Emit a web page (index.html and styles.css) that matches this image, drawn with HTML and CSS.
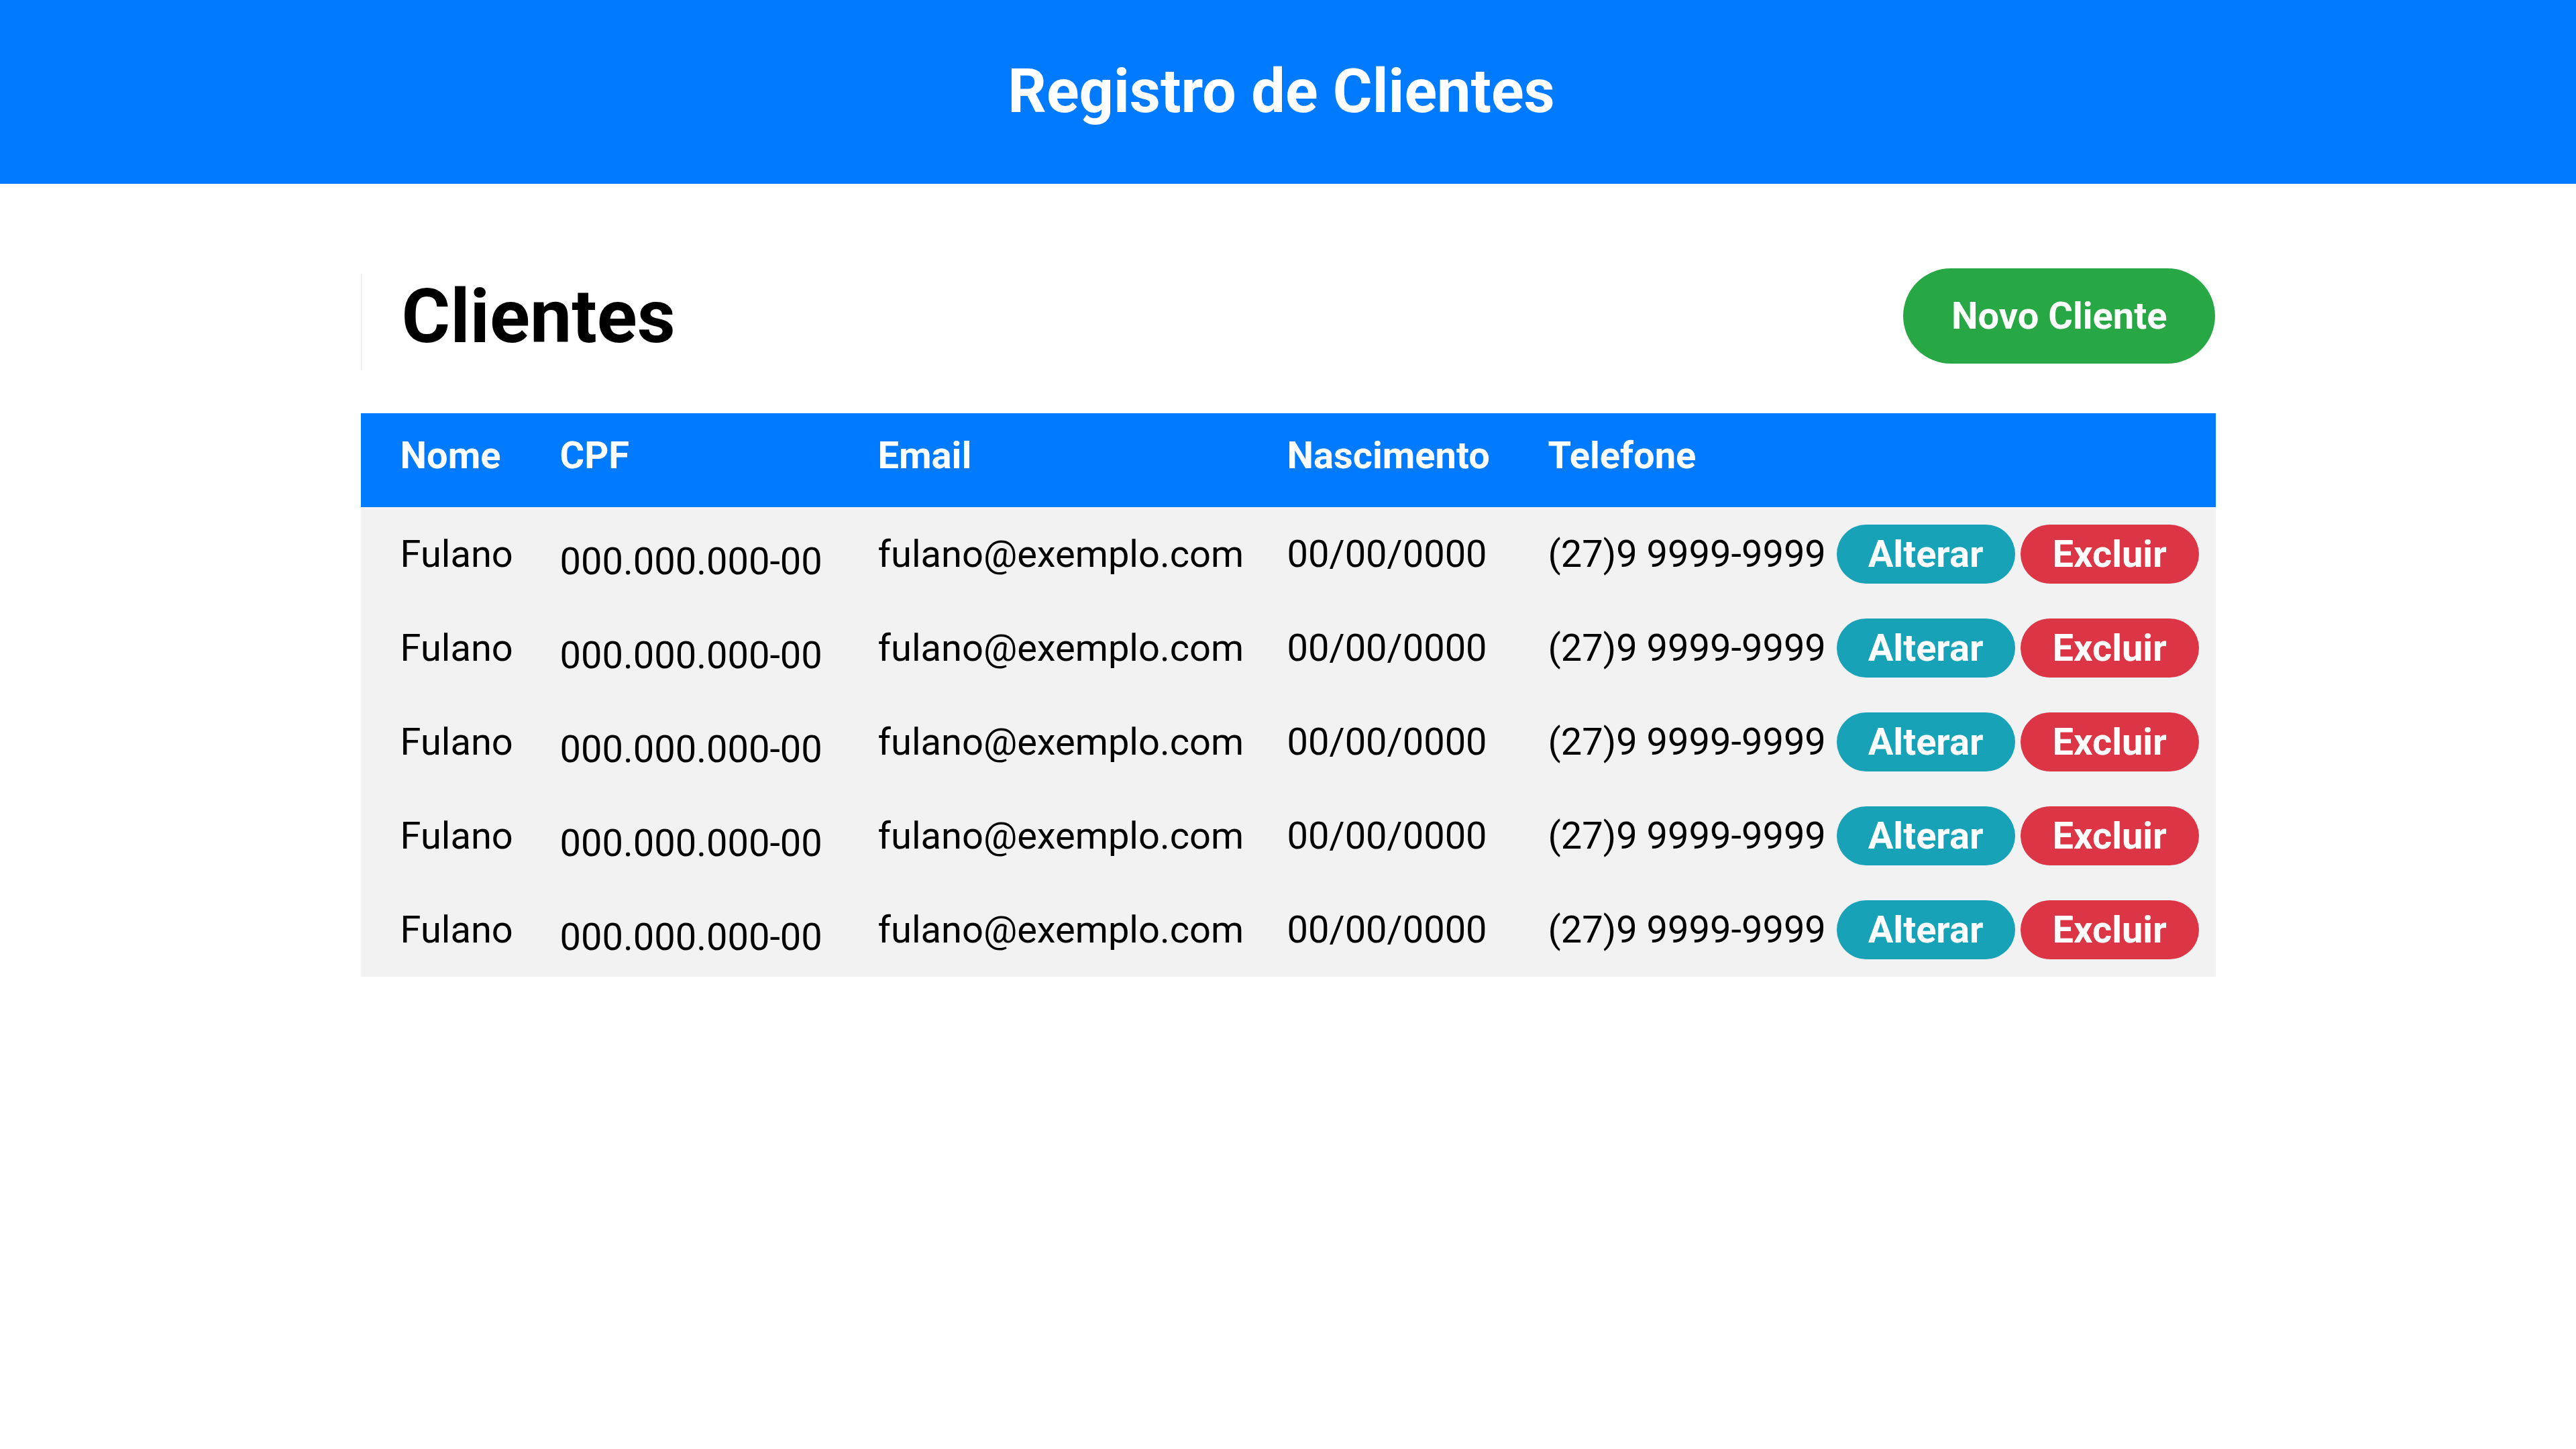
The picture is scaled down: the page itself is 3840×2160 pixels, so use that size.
FILE: index.html
```html
<!DOCTYPE html>
<html lang="pt-BR">
<head>
<meta charset="utf-8">
<title>Registro de Clientes</title>
<link rel="stylesheet" href="styles.css">
</head>
<body>
<header class="topbar">
  <h1 class="topbar-title">Registro de Clientes</h1>
</header>
<main class="container">
  <div class="toolbar">
    <div class="title-box"><h2 class="page-title">Clientes</h2></div>
    <button class="btn btn-new">Novo Cliente</button>
  </div>
  <table class="clients">
    <colgroup>
      <col class="c-nome"><col class="c-cpf"><col class="c-email"><col class="c-nasc"><col class="c-tel"><col class="c-act">
    </colgroup>
    <thead>
      <tr><th class="first">Nome</th><th>CPF</th><th>Email</th><th>Nascimento</th><th>Telefone</th><th></th></tr>
    </thead>
    <tbody>
      <tr><td class="first">Fulano</td><td class="cpf">000.000.000-00</td><td>fulano@exemplo.com</td><td>00/00/0000</td><td>(27)9 9999-9999</td><td class="actions"><div class="btns"><button class="btn btn-edit">Alterar</button><button class="btn btn-del">Excluir</button></div></td></tr>
      <tr><td class="first">Fulano</td><td class="cpf">000.000.000-00</td><td>fulano@exemplo.com</td><td>00/00/0000</td><td>(27)9 9999-9999</td><td class="actions"><div class="btns"><button class="btn btn-edit">Alterar</button><button class="btn btn-del">Excluir</button></div></td></tr>
      <tr><td class="first">Fulano</td><td class="cpf">000.000.000-00</td><td>fulano@exemplo.com</td><td>00/00/0000</td><td>(27)9 9999-9999</td><td class="actions"><div class="btns"><button class="btn btn-edit">Alterar</button><button class="btn btn-del">Excluir</button></div></td></tr>
      <tr><td class="first">Fulano</td><td class="cpf">000.000.000-00</td><td>fulano@exemplo.com</td><td>00/00/0000</td><td>(27)9 9999-9999</td><td class="actions"><div class="btns"><button class="btn btn-edit">Alterar</button><button class="btn btn-del">Excluir</button></div></td></tr>
      <tr><td class="first">Fulano</td><td class="cpf">000.000.000-00</td><td>fulano@exemplo.com</td><td>00/00/0000</td><td>(27)9 9999-9999</td><td class="actions"><div class="btns"><button class="btn btn-edit">Alterar</button><button class="btn btn-del">Excluir</button></div></td></tr>
    </tbody>
  </table>
</main>
</body>
</html>
```
FILE: styles.css
```css
* { box-sizing: border-box; }
html, body { margin: 0; padding: 0; }
body {
  font-family: Roboto, "Liberation Sans", Arial, sans-serif;
  background: #fff;
  color: #000;
}
.topbar {
  background: #007bff;
  height: 274px;
  display: flex;
  justify-content: center;
  align-items: flex-start;
}
.topbar-title {
  margin: 0;
  padding-top: 84px;
  padding-right: 20px;
  color: #fff;
  font-size: 90px;
  font-weight: 700;
  line-height: normal;
}
.container {
  width: 72%;
  margin: 0 auto;
}
.toolbar {
  display: flex;
  justify-content: space-between;
  align-items: flex-start;
  margin-top: 126px;
}
.title-box {
  margin-top: 8px;
  height: 144px;
  border-left: 2px solid #efefef;
  padding-left: 59px;
  padding-top: 9px;
}
.page-title {
  margin: 0;
  font-size: 111px;
  font-weight: 700;
  line-height: 111px;
}
.btn {
  font-family: Roboto, "Liberation Sans", Arial, sans-serif;
  font-weight: 700;
  font-size: 56px;
  line-height: normal;
  color: #fff;
  border: none;
  border-radius: 999px;
  cursor: pointer;
}
.btn-new {
  background: #28a745;
  height: 142px;
  padding: 0 72px;
}
.clients {
  width: 100%;
  margin-top: 64px;
  border-collapse: collapse;
  table-layout: fixed;
  font-size: 56px;
}
.c-nome { width: 297px; }
.c-cpf { width: 474px; }
.c-email { width: 610px; }
.c-nasc { width: 389px; }
.c-tel { width: 430px; }
.c-act { width: 565px; }
.clients thead tr { background: #007bff; }
.clients th {
  color: #fff;
  font-weight: 700;
  text-align: left;
  white-space: nowrap;
  height: 140px;
  padding: 30px 0 44px 0;
  vertical-align: top;
  line-height: normal;
}
.clients tbody tr { background: #f2f2f2; }
.clients td {
  height: 140px;
  padding: 0;
  vertical-align: middle;
  white-space: nowrap;
  line-height: normal;
}
.clients .first { padding-left: 59px; }
.clients td.cpf { padding-top: 21px; }
.clients td.actions { padding-right: 24px; }
.btns {
  display: flex;
  gap: 8px;
}
.btn-edit, .btn-del {
  height: 88px;
  width: 266px;
  padding: 0;
}
.btn-edit { background: #17a2b8; }
.btn-del { background: #dc3545; }
```
